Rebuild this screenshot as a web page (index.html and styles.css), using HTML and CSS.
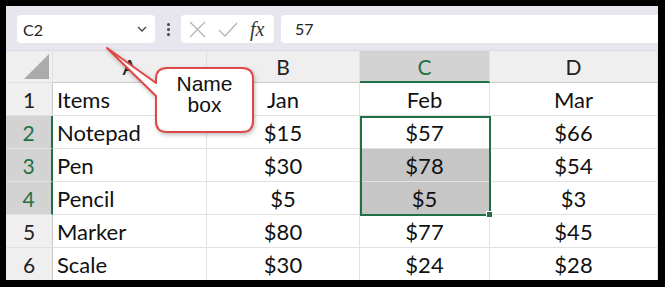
FILE: index.html
```html
<!DOCTYPE html>
<html lang="en">
<head>
    <meta charset="UTF-8">
    <title>Name box</title>
    <link rel="stylesheet" href="styles.css">
</head>
<body>
    <div class="frame">
        <div class="toolbar">
            <div class="name-box">
                <span>C2</span>
                <svg class="chevron" width="10" height="6" viewBox="0 0 10 6"><path d="M1 1 L5 5 L9 1" fill="none" stroke="#444" stroke-width="1.3"/></svg>
            </div>
            <div class="dots"><i></i><i></i><i></i></div>
            <div class="fx-box">
                <svg width="17" height="17" viewBox="0 0 17 17"><path d="M1 1 L16 16 M16 1 L1 16" stroke="#b4b4b4" stroke-width="1.3"/></svg>
                <svg width="20" height="15" viewBox="0 0 20 15"><path d="M1 8 L7 14 L19 1" fill="none" stroke="#b4b4b4" stroke-width="1.3"/></svg>
                <span class="fx">fx</span>
            </div>
            <div class="formula">57</div>
        </div>

        <div class="sheet">
            <div class="corner"><span class="tri"></span></div>
            <div class="col-head">A</div>
            <div class="col-head">B</div>
            <div class="col-head sel">C</div>
            <div class="col-head">D</div>

            <div class="row-head">1</div>
            <div class="cell left">Items</div>
            <div class="cell">Jan</div>
            <div class="cell">Feb</div>
            <div class="cell">Mar</div>

            <div class="row-head sel">2</div>
            <div class="cell left">Notepad</div>
            <div class="cell">$15</div>
            <div class="cell">$57</div>
            <div class="cell">$66</div>

            <div class="row-head sel">3</div>
            <div class="cell left">Pen</div>
            <div class="cell">$30</div>
            <div class="cell shade">$78</div>
            <div class="cell">$54</div>

            <div class="row-head sel">4</div>
            <div class="cell left">Pencil</div>
            <div class="cell">$5</div>
            <div class="cell shade">$5</div>
            <div class="cell">$3</div>

            <div class="row-head">5</div>
            <div class="cell left">Marker</div>
            <div class="cell">$80</div>
            <div class="cell">$77</div>
            <div class="cell">$45</div>

            <div class="row-head">6</div>
            <div class="cell left">Scale</div>
            <div class="cell">$30</div>
            <div class="cell">$24</div>
            <div class="cell">$28</div>

            <div class="selection"><span class="handle"></span></div>
        </div>

        <div class="callout">
            <svg width="160" height="100" viewBox="0 0 160 100">
                <path d="M64 28 Q53 28 53 39 L53 43 L4 8 L53 56 L53 81 Q53 92 64 92 L139 92 Q150 92 150 81 L150 39 Q150 28 139 28 Z" fill="#fff" stroke="#e04848" stroke-width="2" stroke-linejoin="round"/>
            </svg>
            <div class="callout-text">Name<br>box</div>
        </div>
    </div>
</body>
</html>
```

FILE: styles.css
```css
body {
    margin: 0;
    background: #000;
    font-family: Lato, "Open Sans", sans-serif;
}

.frame {
    position: relative;
    width: 652px;
    height: 274px;
    margin: 6px 7px 7px 6px;
    overflow: hidden;
    background: #fff;
}

.toolbar {
    display: flex;
    align-items: center;
    height: 45px;
    padding: 2px 0 0 11px;
    background: #e7e5ed;
    border-bottom: 1px solid #dcdae2;
    box-sizing: border-box;
}

.name-box {
    display: flex;
    align-items: center;
    justify-content: space-between;
    width: 138px;
    height: 28px;
    padding: 0 8px 0 6px;
    background: #fff;
    border-radius: 4px;
    box-sizing: border-box;
    font-size: 16px;
    color: #222;
}

.dots {
    display: flex;
    flex-direction: column;
    gap: 2px;
    margin: 0 11px 0 12px;
}

.dots i {
    width: 3px;
    height: 3px;
    background: #444;
    border-radius: 50%;
}

.fx-box {
    display: flex;
    align-items: center;
    gap: 12px;
    width: 93px;
    height: 28px;
    padding: 0 6px 0 8px;
    background: #fff;
    border-radius: 4px;
    box-sizing: border-box;
}

.fx {
    font-family: "Liberation Serif", serif;
    font-style: italic;
    font-size: 20px;
    color: #333;
}

.formula {
    flex: 1;
    height: 28px;
    margin-left: 7px;
    padding-left: 14px;
    line-height: 28px;
    background: #fff;
    border-radius: 4px 0 0 4px;
    font-size: 16px;
    color: #222;
}

.sheet {
    position: relative;
    display: grid;
    grid-template-columns: 47px 154px 153px 130px 1fr;
    grid-template-rows: 32px repeat(6, 33px);
    font-size: 22px;
    color: #111;
}

.sheet > div {
    display: flex;
    align-items: center;
    justify-content: center;
    border-right: 1px solid #e1e1e1;
    border-bottom: 1px solid #e1e1e1;
    box-sizing: border-box;
}

.corner {
    position: relative;
    background: #efefef;
}

.tri {
    position: absolute;
    right: 3px;
    bottom: 3px;
    width: 0;
    height: 0;
    border-left: 25px solid transparent;
    border-bottom: 25px solid #ababab;
}

.sheet .col-head {
    background: #efefef;
    border-bottom-color: #c9c9c9;
    color: #222;
    font-size: 21px;
}

.sheet .col-head.sel {
    background: #d3d3d3;
    color: #1f7145;
    border-bottom: 2px solid #1f7145;
}

.sheet .row-head {
    background: #efefef;
    border-right-color: #c9c9c9;
    color: #222;
    font-size: 21px;
}

.sheet .row-head.sel {
    background: #d3d3d3;
    color: #1f7145;
    border-right: 2px solid #1f7145;
}

.sheet .left {
    justify-content: flex-start;
    padding-left: 4px;
}

.sheet .shade {
    background: #c6c6c6;
}

.selection {
    position: absolute;
    left: 354px;
    top: 65px;
    width: 131px;
    height: 100px;
    border: 2px solid #1f7145 !important;
    box-sizing: border-box;
}

.handle {
    position: absolute;
    right: -4px;
    bottom: -4px;
    width: 5px;
    height: 5px;
    background: #1f7145;
    border: 1px solid #fff;
}

.callout {
    position: absolute;
    left: 97px;
    top: 34px;
    width: 160px;
    height: 100px;
}

.callout svg {
    display: block;
    filter: drop-shadow(1px 2px 2px rgba(0, 0, 0, 0.25));
}

.callout-text {
    position: absolute;
    left: 53px;
    top: 22px;
    width: 97px;
    height: 64px;
    display: flex;
    align-items: center;
    justify-content: center;
    text-align: center;
    font-family: "Liberation Sans", Arial, sans-serif;
    font-size: 21px;
    line-height: 21px;
    color: #111;
}
```
